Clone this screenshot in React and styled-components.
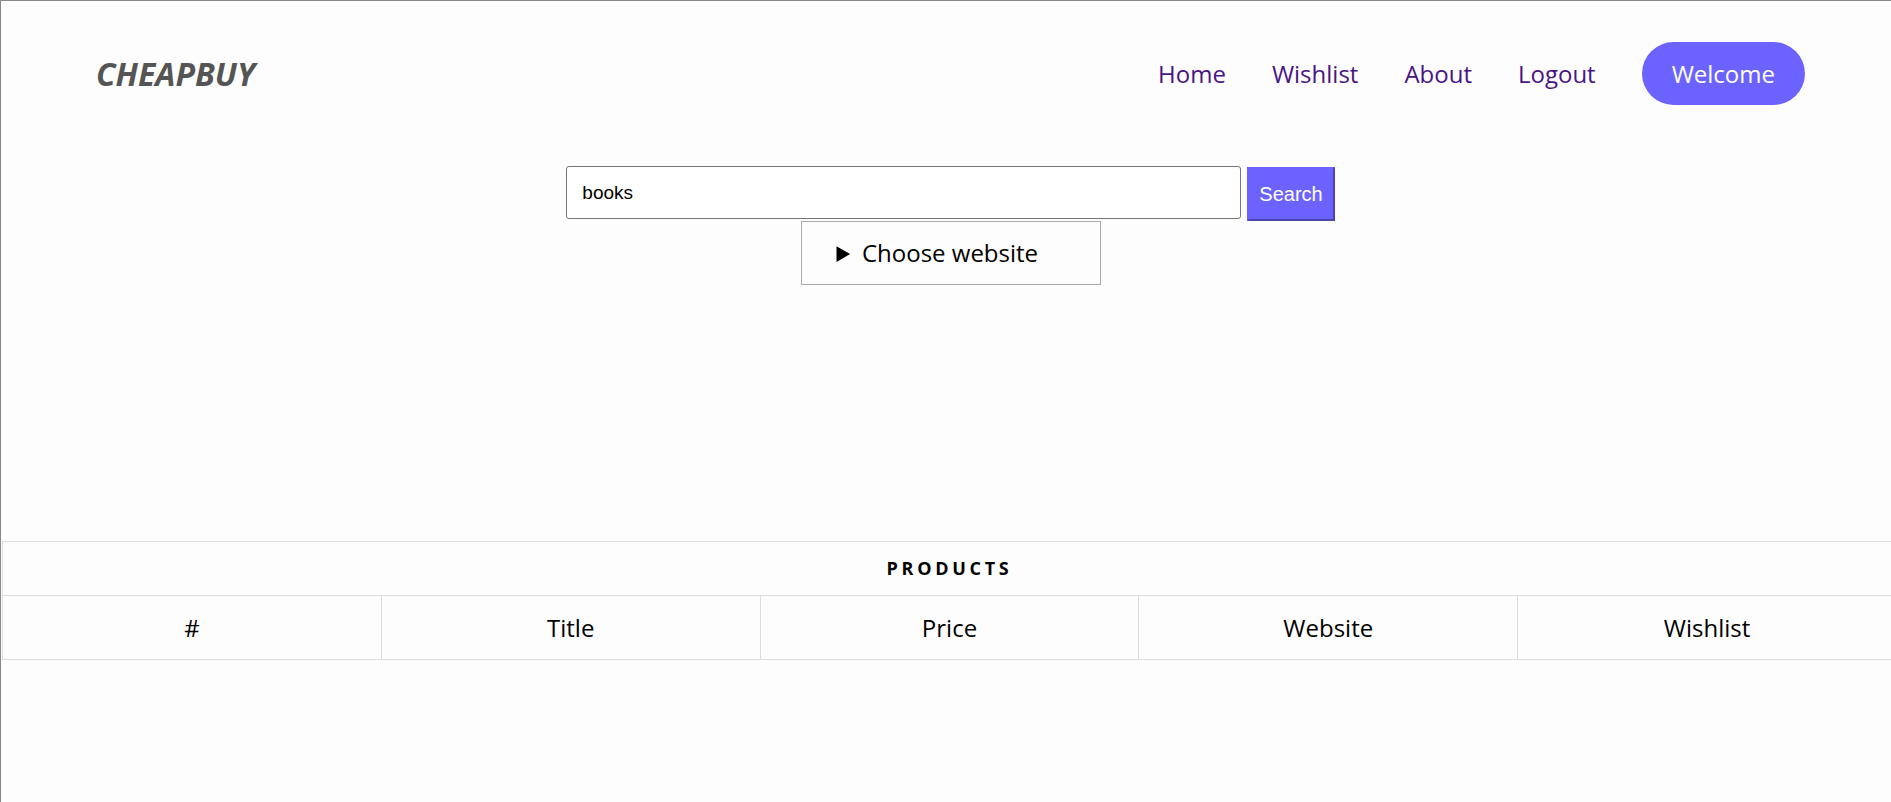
import React from "react"
import styled, { createGlobalStyle } from "styled-components"

const GlobalStyle = createGlobalStyle`
body {
margin: 0;
background: #fdfdfd;
overflow: hidden;
font-family: "Open Sans", sans-serif;
}
`

const Page = styled.div`
width: 1899px;
min-height: 801px;
border-top: 1px solid #888;
border-left: 1px solid #888;
background: #fdfdfd;
`

const Header = styled.header`
display: flex;
align-items: center;
justify-content: space-between;
padding: 41px 95px 0 95px;
`

const Logo = styled.div`
font-size: 32px;
font-weight: 700;
font-style: italic;
color: #555;
line-height: 1;
`

const Nav = styled.nav`
display: flex;
align-items: center;
gap: 46px;
`

const NavLink = styled.a`
font-size: 24px;
color: #4a1483;
text-decoration: none;
cursor: pointer;
`

const WelcomeButton = styled.button`
font-family: "Open Sans", sans-serif;
font-size: 24px;
color: #fff;
background: #6c63ff;
border: none;
border-radius: 32px;
padding: 15px 30px;
line-height: 33px;
`

const SearchForm = styled.form`
display: flex;
justify-content: center;
align-items: flex-start;
gap: 6px;
margin-top: 61px;
`

const SearchInput = styled.input`
width: 675px;
height: 53px;
box-sizing: border-box;
border: 1px solid #767676;
border-radius: 3px;
padding: 0 15px;
font-family: "Liberation Sans", Arial, sans-serif;
font-size: 19px;
color: #000;
background: #fff;
`

const SearchButton = styled.button`
height: 54px;
margin-top: 1px;
box-sizing: border-box;
padding: 0 10px;
font-family: "Liberation Sans", Arial, sans-serif;
font-size: 20px;
color: #fff;
background: #6c63ff;
border: 2px solid;
border-color: #6c63ff #4a43b0 #4a43b0 #6c63ff;
`

const Choose = styled.details`
width: 300px;
box-sizing: border-box;
margin: 0 auto;
border: 1px solid #aaa;
padding: 15px 35px;
font-size: 24px;
color: #000;
summary {
cursor: pointer;
line-height: 32px;
}
`

const Table = styled.table`
width: 1895px;
margin: 256px 0 0 1px;
border-collapse: collapse;
`

const Caption = styled.th`
border: 1px solid #ddd;
padding: 14px 15px 15px;
font-size: 18px;
font-weight: 700;
letter-spacing: 3.7px;
text-transform: uppercase;
color: #000;
`

const HeadCell = styled.th`
width: 20%;
border: 1px solid #ddd;
padding: 15px;
font-size: 24px;
font-weight: 400;
color: #000;
`

const columns = ["#", "Title", "Price", "Website", "Wishlist"]

const App = () => (
    <Page>
        <GlobalStyle />
        <Header>
            <Logo>CHEAPBUY</Logo>
            <Nav>
                <NavLink>Home</NavLink>
                <NavLink>Wishlist</NavLink>
                <NavLink>About</NavLink>
                <NavLink>Logout</NavLink>
                <WelcomeButton>Welcome</WelcomeButton>
            </Nav>
        </Header>
        <SearchForm onSubmit={e => e.preventDefault()}>
            <SearchInput defaultValue="books" />
            <SearchButton type="submit">Search</SearchButton>
        </SearchForm>
        <Choose>
            <summary>Choose website</summary>
        </Choose>
        <Table>
            <thead>
                <tr><Caption colSpan={5}>Products</Caption></tr>
                <tr>
                    {columns.map(c => <HeadCell key={c}>{c}</HeadCell>)}
                </tr>
            </thead>
        </Table>
    </Page>
)

export default App
